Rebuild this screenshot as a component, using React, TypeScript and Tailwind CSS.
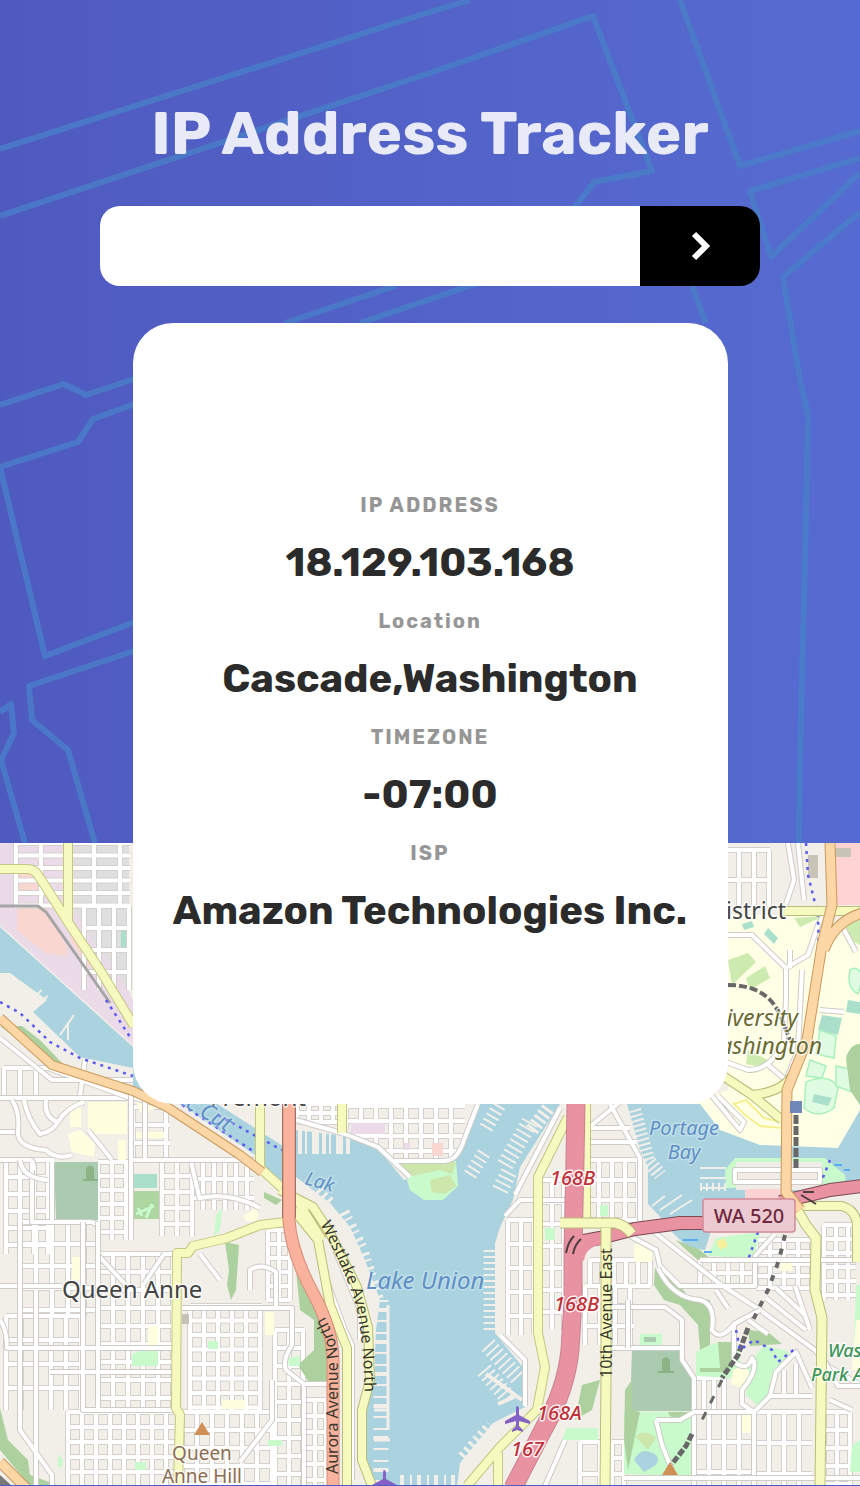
import React from "react";

type RoadProps = { d: string; fill: string; casing: string; width: number; edge?: number };

function Road({ d, fill, casing, width, edge = 2 }: RoadProps) {
  return (
    <g fill="none" strokeLinejoin="round">
      <path d={d} stroke={casing} strokeWidth={width + edge} />
      <path d={d} stroke={fill} strokeWidth={width} />
    </g>
  );
}

/* Street blocks: left, top, right, bottom, column spacing, row spacing */
type Block = [number, number, number, number, number, number];

const blocks: Block[] = [
  [16, 843, 68, 908, 25, 12.5],
  [68, 843, 130, 906, 26, 12.5],
  [84, 906, 129, 990, 15, 22],
  [4, 1068, 48, 1098, 16, 30],
  [98, 1162, 131, 1240, 14, 14],
  [133, 1107, 170, 1160, 33, 18],
  [162, 1160, 192, 1236, 15, 16],
  [192, 1160, 254, 1210, 11, 19],
  [6, 1160, 54, 1254, 14, 17],
  [20, 1222, 98, 1316, 16, 22],
  [98, 1254, 176, 1410, 15, 18],
  [6, 1316, 83, 1410, 15, 24],
  [190, 1306, 262, 1410, 14, 14.5],
  [68, 1412, 176, 1486, 14, 15],
  [182, 1412, 275, 1486, 15, 18],
  [268, 1230, 290, 1300, 11, 14],
  [275, 1330, 304, 1486, 14, 18],
  [304, 1400, 326, 1486, 11, 16],
  [297, 1104, 338, 1122, 12, 9],
  [346, 1106, 465, 1158, 15, 15],
  [508, 1220, 535, 1335, 13, 24],
  [540, 1180, 565, 1330, 12, 22],
  [586, 1160, 642, 1222, 13, 20],
  [590, 1260, 650, 1286, 12, 26],
  [585, 1286, 634, 1345, 15, 20],
  [700, 1260, 756, 1286, 14, 13],
  [756, 1240, 812, 1288, 14, 12],
  [824, 1225, 856, 1300, 12, 14],
  [694, 1378, 724, 1412, 10, 34],
  [694, 1412, 754, 1486, 15, 30],
  [754, 1412, 812, 1486, 15, 31],
  [824, 1412, 852, 1486, 13, 18],
  [612, 1442, 624, 1486, 12, 16],
  [580, 1442, 600, 1486, 20, 32],
  [724, 850, 770, 906, 15, 30],
];

function blockPath([l, t, r, b, dx, dy]: Block): string {
  const parts: string[] = [];
  for (let x = l; x <= r; x += dx) parts.push(`M${x} ${t}V${b}`);
  for (let y = t; y <= b; y += dy) parts.push(`M${l} ${y}H${r}`);
  return parts.join("");
}

const gridPath = blocks.map(blockPath).join("");

const streets = [
  "M0 1098H135L170 1107M0 1132H20M32 1162V1222H54M0 1160H30Q34 1160 34 1170M52 1162V1222H90Q98 1222 98 1230V1255L125 1284M0 1286H62M144 1284L164 1254H176",
  "M12 1100Q20 1112 18 1130T46 1150Q56 1160 72 1155M24 1100Q28 1120 40 1134Q52 1132 58 1122Q66 1108 84 1102M46 1100Q44 1118 58 1122M48 1068L130 1098M0 1038L52 1080H133M85 1060L80 1095M88 1130L112 1160M20 1160Q22 1178 48 1180",
  "M0 1320Q7 1330 7 1348H176M20 1222V1430L52 1475V1486M36 1290V1486M83 1222V1410H176M50 1372H176M98 1222V1412M131 1090V1240M145 1090V1160M130 1160H250M130 1254H160",
  "M182 1308H292V1345Q282 1360 286 1370L304 1384V1486M200 1254L220 1280M250 1290V1270Q262 1262 276 1272V1308M272 1380V1420L240 1462M192 1166L200 1200M200 1198Q230 1192 260 1208",
  "M296 1120L345 1134L378 1147L410 1177M394 1161H445Q458 1160 464 1140L478 1104M320 1262L345 1330L352 1345V1480M335 1250L360 1310V1340M305 1384H330M500 1335L525 1360V1406M505 1216L520 1200H565M515 1195L560 1108M565 1440L545 1486",
  "M588 1128L620 1102M610 1104L640 1158V1222L654 1232L720 1284L760 1310L815 1350L828 1366L862 1386M588 1128H630M586 1142H636M610 1307H665L682 1320V1360L694 1378V1486M610 1348H682M630 1236L656 1250L660 1266L680 1286H755V1256L775 1234",
  "M658 1268Q672 1298 700 1300Q716 1304 712 1330Q720 1342 734 1324V1362Q748 1372 752 1358Q760 1368 742 1390V1404L754 1412M734 1324L760 1310M694 1412H754L770 1396H812M754 1412V1486M728 1308L716 1290M748 1320L768 1334M795 1286L810 1330M776 1288L806 1316M766 1298L806 1330M700 1260H856M770 1396L776 1372L796 1352L812 1388M784 1396V1370M796 1394V1364M628 1348V1300",
  "M724 935H752L786 968L808 955L818 925L824 915M786 968V1000L784 1040Q772 1070 748 1070L726 1062M802 970L798 1050L786 1080L768 1065M790 950V968M843 928L856 952M820 1010L844 1012M788 843L794 880L786 904M798 843L804 900M712 1096L740 1130L744 1122L718 1096",
  "M735 1170H820V1182H735ZM656 1420L662 1445L672 1470M656 1420H680L694 1412M624 1478H862M860 1386H838L824 1360M830 1400L852 1410",
];

const piersEast = "M492 1250V1330M500 1190L510 1170M505 1165L530 1122M488 1345L520 1380M484 1370L510 1400";

function CityMap() {
  return (
    <svg
      className="block h-[642px] w-full"
      viewBox="0 843 860 642"
      preserveAspectRatio="xMidYMin slice"
      role="img"
      aria-label="Map"
      fontFamily="'Noto Sans', sans-serif"
    >
      <defs>
        <path id="westlake" d="M320 1224Q344 1268 354 1300T365 1410" />
        <path id="aurora" d="M338 1474V1356Q336 1334 318 1306" />
        <path id="tenth" d="M612 1378V1236" />
      </defs>
      <rect y="843" width="860" height="643" fill="#f2efe9" />

      {/* Land use */}
      <path d="M0 843H92V925L133 1000V1045L0 925Z" fill="#ebdbe8" />
      <path d="M73 843H129V992L74 912Z" fill="#dfdfdf" />
      <path d="M17 907H45L67 947V956L45 953L17 930ZM17 872H37L42 892H17ZM75 922L92 960L88 968L70 940Z" fill="#fad6d0" />
      <path d="M121 926H128V948H121Z" fill="#aae0cb" />
      <path d="M836 843H860V905H836Z" fill="#ffd3d1" />
      <path d="M808 855H818V878H808ZM835 848H851V857H835Z" fill="#c8c5b8" />
      <path d="M728 915H826L808 1050L860 1060V1140L837 1148L760 1148L728 1140L696 1120L684 1106L728 1090Z" fill="#ffffe5" />
      <path d="M826 925L860 915V1130L800 1130L800 1060Z" fill="#ffffe5" />
      <path d="M836 925L860 915V945L850 940ZM728 960L748 953L756 962L732 985ZM746 978L765 966L770 978L750 990ZM748 1050L768 1060L766 1068L746 1064ZM794 918L824 916L800 927Z" fill="#cdebb0" />
      <path d="M742 924L752 921L754 927L744 930ZM768 928L778 938L774 944L764 934ZM822 1015L842 1018L838 1035L818 1030ZM848 1000L860 1002V1014L846 1012Z" fill="#aae0cb" />
      <path d="M820 1030l16 6-2 22-18-4zM810 1060l16 6-4 12-16-2zM836 1066l18 4-2 22-16-6zM806 1082q24-10 32 6l-4 20q-16 12-30 0zM850 970q10-6 12 10l-4 14q-12-6-8-24z" fill="#dffce2" stroke="#a8f0bc" strokeWidth="1.5" />
      <path d="M814 1094l18 4-4 8-16-4z" fill="#aae0cb" />
      <path d="M846 1058Q850 1044 860 1044V1105L850 1090Z" fill="#add19e" />
      <path d="M734 1104L746 1100L764 1118L782 1122V1128L760 1126L744 1114Z" fill="none" stroke="#f7f090" strokeWidth="2" />

      {/* Minor streets */}
      <Road d={gridPath} fill="#ffffff" casing="#d3d0cd" width={4} />

      {/* Parks, schools and cemeteries */}
      <path d="M88 1102H127V1134H88ZM70 1104H81V1127H70ZM68 1134L80 1130L95 1144L94 1157L72 1152ZM118 1140H126V1160H118ZM136 1102L154 1100V1110L140 1112ZM136 1132H164V1138H136ZM72 1257H80V1280H72ZM148 1326H158V1348H148ZM243 1216L258 1207V1220L246 1222ZM265 1312H274V1335H265ZM222 1400H245V1409H222Z" fill="#ffffe0" />
      <path d="M0 1026L22 1026L40 1040L62 1063L52 1065ZM0 1408L8 1440L28 1460L30 1475L60 1486H30L0 1450ZM225 1242L239 1245L236 1290L231 1300L227 1285L229 1270ZM264 1192L282 1200L276 1205L264 1198ZM292 1230L316 1300L334 1355V1384H310L298 1365L314 1350V1320L300 1310Z" fill="#add19e" />
      <path d="M134 1191H159V1219H134Z" fill="#aed6a0" />
      <path d="M136 1214l18-8M146 1218l6-14M142 1216l-4-8" stroke="#c8facc" strokeWidth="3" />
      <path d="M134 1174H157V1188H134Z" fill="#aae0cb" />
      <path d="M216 1215L222 1208L220 1230L214 1236ZM132 1354L142 1350L158 1350V1366H132ZM208 1341H218V1349H208ZM288 1358L300 1356V1366H289ZM268 1440H282V1446H268ZM135 1462H146V1470H135ZM58 1454L63 1460L62 1467H58Z" fill="#c8facc" />
      <path d="M54 1162H98V1220H56Z" fill="#aacbaf" />
      <path d="M86 1180V1168Q90 1163 94 1168V1180ZM83 1179H98V1181H83Z" fill="#8cb387" />
      <path d="M352 1123H385V1134H350ZM404 1143H410V1150H404Z" fill="#ebdbe8" />
      <path d="M432 1143H443V1156H432Z" fill="#fad6d0" />
      <path d="M182 1314H189V1324H182Z" fill="#c5c2b6" />

      {/* Water */}
      <g fill="#aad3df">
        <path d="M0 927L133 1047V1068L80 1057L33 1012L47 1000L10 973H0Z" />
        <path d="M133 1050L289 1150V1195L275 1180L255 1155L182 1105L133 1090Z" />
        <path d="M296 1130L345 1136L378 1149L404 1180L450 1166L466 1140L480 1104H560L520 1167L513 1200L500 1227L495 1243V1333L525 1370V1407L493 1423L460 1463L457 1486H403L366 1486L364 1420L374 1380L376 1330L380 1300L365 1260L350 1227L330 1203L296 1177Z" />
        <path d="M627 1104H700L720 1130L760 1145L838 1148L860 1110V1190L790 1200L740 1222L665 1222L648 1204V1167L640 1150Z" />
        <path d="M668 1228H712L705 1250L688 1248Z" />
      </g>
      {/* Piers and docks */}
      <g fill="none" stroke="#f2efe9">
        <path d="M298 1142H352" strokeWidth="24" strokeDasharray="4 3 2 5 7 3" />
        <path d="M318 1190L332 1204" strokeWidth="10" strokeDasharray="3 4" />
        <path d={piersEast} strokeWidth="17" strokeDasharray="2 4" />
        <path d="M340 1214L358 1250L374 1300" strokeWidth="20" strokeDasharray="3 4 2 6" />
        <path d="M381 1300V1486" strokeWidth="15" strokeDasharray="2 6 4 8 2 10" />
        <path d="M388 1305V1430M374 1410H388M374 1440H390" strokeWidth="3" />
        <path d="M466 1460L494 1428" strokeWidth="20" strokeDasharray="3 4" />
        <path d="M486 1374L522 1400M498 1404L516 1396" strokeWidth="4" />
        <path d="M470 1175L486 1150M486 1128L500 1104" strokeWidth="14" strokeDasharray="2 4" />
        <path d="M532 1130L550 1106" strokeWidth="14" strokeDasharray="3 3" />
        <path d="M634 1110L648 1160L660 1175" strokeWidth="14" strokeDasharray="2 3" />
        <path d="M652 1206L665 1196M660 1210L682 1195M670 1214L692 1200M700 1168H726M700 1178H726M700 1188H726" strokeWidth="2" />
        <path d="M700 1187H726" strokeWidth="8" strokeDasharray="2 4" />
        <path d="M30 1000L42 990M34 1006L48 996M60 1035L74 1015M68 1040V1022" strokeWidth="2" />
        <path d="M400 1480H456" strokeWidth="10" strokeDasharray="4 6 2 5" />
      </g>
      <path d="M407 1180L412 1164L456 1161L458 1186L443 1200H424L410 1190Z" fill="#c8facc" />
      <path d="M398 1162H456L452 1174L440 1170L412 1176ZM430 1180L450 1175L456 1186L445 1194L432 1192Z" fill="#cde6ac" />
      <path d="M725 1170L735 1158H825L845 1175L846 1183L825 1188H726Z" fill="#c8facc" />
      <path d="M736 1162H822V1190H736Z" fill="#f0ede8" />
      <path d="M745 1189H790V1205H745Z" fill="#fad3d3" />

      {/* East side greens */}
      <path d="M676 1240L700 1250L710 1258L698 1260L684 1248ZM655 1268L670 1275L690 1298L710 1300V1345L700 1350L698 1325L680 1305L664 1300L654 1285ZM748 1330L768 1332L782 1344L750 1346Z" fill="#add19e" />
      <path d="M716 1238L760 1232L754 1258L708 1256ZM696 1352L718 1342L738 1345L742 1372L764 1345L790 1352L770 1380L770 1396L758 1406L746 1395L750 1370L730 1378L696 1376ZM624 1412H694V1476L624 1474ZM640 1334H662V1345H640ZM600 1205H608V1216H600ZM566 1428H598V1440H562ZM545 1228H555V1240H545ZM856 1285H860V1370H853ZM852 1445L860 1440V1472H850Z" fill="#c8facc" />
      <path d="M718 1342H734V1362L726 1372H700V1368H720Z" fill="#add19e" />
      <path d="M644 1337H656V1342H644Z" fill="#aacbaf" />
      <path d="M632 1349H682L692 1380V1411H630Z" fill="#aacbaf" />
      <path d="M662 1372V1360Q666 1354 670 1360V1372ZM658 1371H674V1373H658Z" fill="#8cb387" />
      <path d="M625 1390L632 1380V1410L640 1412L628 1470L624 1440ZM668 1412H692L680 1420L670 1416ZM582 1385L600 1380L592 1410L575 1420Z" fill="#add19e" />
      <path d="M635 1436Q646 1428 656 1438L648 1450Z" fill="#cde6ac" />
      <path d="M634 1460Q640 1448 650 1452Q662 1456 656 1465L644 1472Z" fill="#aad3df" />
      <path d="M733 1370L745 1364L752 1378L745 1390L731 1384ZM634 1244H652V1262H634ZM780 1263H792V1271H780ZM742 1415H751V1433H742ZM856 1320H860V1370H852Z" fill="#ffffe0" />
      <path d="M716 1242L724 1238L728 1246L720 1250Z" fill="#f6f09a" />

      {streets.map((d) => (
        <Road key={d} d={d} fill="#ffffff" casing="#cecbc8" width={4} />
      ))}

      {/* Railways and paths */}
      <g fill="none">
        <path d="M0 906H38L46 912L110 1003" stroke="#a5a5a5" strokeWidth="3" />
        <path d="M728 985Q770 985 782 1020L790 1040" stroke="#686868" strokeWidth="4" strokeDasharray="8 3" />
        <path d="M796 1104V1170" stroke="#686868" strokeWidth="5" strokeDasharray="9 2" />
        <path d="M785 1235L779 1260L768 1290L752 1322" stroke="#686868" strokeWidth="4" strokeDasharray="6 8" />
        <path d="M748 1328L738 1355L722 1378M692 1434L686 1446L672 1464" stroke="#686868" strokeWidth="5" strokeDasharray="7 2" />
        <path d="M722 1380L698 1428" stroke="#686868" strokeWidth="3" strokeDasharray="8 10" />
        <g stroke="#5b5bf0" strokeWidth="2.5" strokeDasharray="3 5">
          <path d="M0 1002L20 1013L50 1042L80 1058L133 1076" />
          <path d="M182 1105L253 1151M218 1115L254 1135L282 1150M106 1000L132 1040" />
          <path d="M806 843L808 875L818 915L819 955L813 985" />
          <path d="M736 1330L740 1350L754 1340L772 1350L778 1362L796 1348M758 1232L748 1260M830 1160L822 1180" />
        </g>
        <path d="M683 1240H698M704 1252H712M680 1228H692M834 1165H842M844 1170H850" stroke="#55aef0" strokeWidth="2" />
      </g>

      {/* Secondary roads */}
      <Road
        d="M0 869H28Q35 869 40 878L70 925L100 970L134 1026M68 843V922M260 1104V1170M260 1168L300 1204M178 1485L180 1415L176 1408L177 1253H188L193 1246L227 1238L260 1225L286 1222M342 1104V1133"
        fill="#f7fabf" casing="#c3c780" width={8}
      />
      <Road
        d="M280 1190L313 1207L330 1233L357 1287L368 1327L370 1380L362 1410V1460L372 1486M292 1208L318 1240L330 1305L347 1348V1486M296 1198L322 1240"
        fill="#f7fabf" casing="#b9bd79" width={8}
      />
      <Road
        d="M568 1117L538 1177V1333L545 1367L537 1410L500 1447L467 1486M498 1453V1486M586 1104V1223"
        fill="#f7fabf" casing="#c3c780" width={8}
      />
      <Road
        d="M782 911H860M720 1074L752 1095L782 1120M752 1095Q782 1092 792 1076M862 1206M800 1206H842Q856 1210 857 1225V1262"
        fill="#f7fabf" casing="#b9bd79" width={8}
      />

      {/* Motorways */}
      <g fill="none" strokeLinejoin="round">
        <path d="M576 1104L575 1160L573 1250V1300L570 1350Q566 1390 543 1430L513 1488M573 1243L600 1238L635 1229L680 1223H710M780 1202L830 1190L862 1186" stroke="#7c4a55" strokeWidth="14" />
        <path d="M576 1104L575 1160L573 1250V1300L570 1350Q566 1390 543 1430L513 1488" stroke="#c98391" strokeWidth="19" />
        <path d="M576 1104L575 1160L573 1250V1300L570 1350Q566 1390 543 1430L513 1488" stroke="#e892a2" strokeWidth="17" />
        <path d="M573 1243L600 1238L635 1229L680 1223H710M780 1202L830 1190L862 1186M578 1260Q580 1240 605 1238" stroke="#e892a2" strokeWidth="12" />
        <path d="M566 1253Q568 1242 574 1236M573 1254Q575 1244 581 1239M801 1195L816 1204M803 1192L814 1192" stroke="#4b3c3f" strokeWidth="2" />
      </g>
      <Road
        d="M560 1223H615Q624 1224 632 1234M606 1228V1380L605 1486M796 1208L806 1225L816 1238L815 1290L822 1318L820 1486"
        fill="#f7fabf" casing="#b9bd79" width={9}
      />

      {/* Primary roads */}
      <Road d="M0 1018L52 1065L133 1091L167 1107L240 1155L262 1172" fill="#fcd6a4" casing="#c99a5e" width={8} />
      <Road d="M0 1462L26 1488" fill="#fcd6a4" casing="#c99a5e" width={9} />
      <path d="M0 1475L12 1486H0Z" fill="#777" />
      <Road
        d="M830 843L832 905L822 945L807 1040L787 1090L786 1192L800 1210M862 913Q834 922 824 950"
        fill="#fcd6a4" casing="#c99a5e" width={9}
      />
      <path d="M289 1104V1218" stroke="#6b5b58" strokeWidth="14" fill="none" />
      <Road d="M289 1104V1220Q291 1252 313 1293Q333 1330 333 1360V1486" fill="#f9b29c" casing="#d68c79" width={11} />

      {/* Map symbols */}
      <rect x="790" y="1101" width="12" height="12" fill="#7088b8" />
      <path d="M194 1435L202 1422L210 1435ZM662 1475L670 1462L678 1475Z" fill="#d08f55" />
      <g fill="#8461c4">
        <path id="plane" d="M517 1406Q519 1406 519 1410V1415L530 1421V1424L519 1421V1426L523 1430V1432L517 1430L512 1432V1430L516 1426V1421L505 1424V1421L516 1415V1410Q516 1406 517 1406Z" />
        <use href="#plane" x="-133" y="64" />
      </g>

      {/* Labels */}
      <g stroke="#ffffff" strokeWidth="3" strokeOpacity="0.7" paintOrder="stroke" strokeLinejoin="round">
        <g fontSize="24" fill="#444444">
          <text x="62" y="1298">Queen Anne</text>
          <text x="786" y="919" fontSize="23" textAnchor="end">District</text>
          <text x="258" y="1106" textAnchor="middle">Fremont</text>
        </g>
        <g fontSize="23" fontStyle="italic" fill="#6a6a30">
          <text x="798" y="1026" textAnchor="end">University</text>
          <text x="822" y="1054" textAnchor="end">Washington</text>
        </g>
        <g fontStyle="italic" fill="#5f8fc6" strokeOpacity="0.3">
          <text x="366" y="1289" fontSize="24">Lake Union</text>
          <g fontSize="20" textAnchor="middle">
            <text x="684" y="1135">Portage</text>
            <text x="684" y="1159">Bay</text>
          </g>
          <text x="304" y="1184" fontSize="19" transform="rotate(16 304 1184)">Lak</text>
          <text x="180" y="1104" fontSize="22" transform="rotate(31 180 1104)">ic Cut</text>
        </g>
        <g fontSize="19" fill="#8d6d52" textAnchor="middle">
          <text x="202" y="1460">Queen</text>
          <text x="202" y="1483">Anne Hill</text>
        </g>
        <g fontSize="18" fontStyle="italic" fontWeight="500" fill="#3d9457">
          <text x="828" y="1357">Washington</text>
          <text x="811" y="1381">Park Arboretum</text>
        </g>
        <g fontSize="20" fontStyle="italic" fontWeight="500" fill="#c03038" strokeOpacity="0.85">
          <text x="550" y="1185">168B</text>
          <text x="554" y="1311">168B</text>
          <text x="537" y="1420">168A</text>
          <text x="511" y="1456">167</text>
        </g>
      </g>
      <g fontSize="16" fill="#38382c">
        <text><textPath href="#westlake">Westlake Avenue North</textPath></text>
        <text><textPath href="#aurora">Aurora Avenue North</textPath></text>
        <text><textPath href="#tenth">10th Avenue East</textPath></text>
      </g>
      <rect x="703" y="1199" width="92" height="33" rx="3" fill="#ebcbd1" stroke="#d28a97" strokeWidth="1.5" />
      <text x="749" y="1223" fontSize="20" fontWeight="500" fill="#70283f" textAnchor="middle">WA 520</text>
    </svg>
  );
}

function HeaderPattern() {
  return (
    <svg
      className="absolute inset-0 h-full w-full"
      viewBox="0 0 860 843"
      preserveAspectRatio="xMidYMin slice"
      aria-hidden="true"
    >
      <g fill="none" stroke="#497fc9" strokeWidth="6" strokeLinejoin="round" opacity="0.8">
        <path d="M0 149L430 12L470 0" />
        <path d="M0 216L430 73L593 16L652 171L594 182L575 207L540 262L360 323" />
        <path d="M395 286L285 323M692 286L706 323" />
        <path d="M680 0L740 166L860 131" />
        <path d="M860 158L750 191L771 257L860 173" />
        <path d="M860 212L783 277L800 380L808 415L805 560L800 760L799 843" />
        <path d="M0 405L64 384L86 395L140 377" />
        <path d="M140 402L93 419L78 442L0 467L45 656L140 620" />
        <path d="M140 649L29 686L32 720L68 750L95 843" />
        <path d="M0 712L11 704L14 733L1 760L25 843" />
      </g>
    </svg>
  );
}

const details = [
  { label: "IP ADDRESS", value: "18.129.103.168" },
  { label: "Location", value: "Cascade,Washington" },
  { label: "TIMEZONE", value: "-07:00" },
  { label: "ISP", value: "Amazon Technologies Inc." },
];

export default function App() {
  return (
    <div className="min-h-screen bg-[#4f5bbf] font-['Rubik','Inter',sans-serif]">
      <header className="relative z-10 flex flex-col items-center bg-linear-to-r from-[#4f5abf] to-[#566bd1] px-6 pt-[98px]">
        <HeaderPattern />
        <h1 className="relative text-center text-[60px] leading-[72px] font-bold text-[#e8eaf8]">
          IP Address Tracker
        </h1>
        <form
          className="relative mt-9 flex h-20 w-full max-w-[660px] overflow-hidden rounded-[20px]"
          onSubmit={(e: React.FormEvent) => e.preventDefault()}
        >
          <input
            type="text"
            aria-label="IP address or domain"
            className="min-w-0 flex-1 bg-white px-6 text-2xl text-[#2b2b2b] outline-none"
          />
          <button type="submit" aria-label="Search" className="flex w-[120px] items-center justify-center bg-black">
            <svg className="h-8 w-6" viewBox="0 0 24 32" fill="none" stroke="#ffffff" strokeWidth="6">
              <path d="M6 4L18 16L6 28" />
            </svg>
          </button>
        </form>
        <dl className="relative mt-[37px] -mb-[261px] flex w-full max-w-[595px] flex-col gap-[22px] rounded-[40px] bg-white px-4 pt-[170px] pb-[169px] text-center">
          {details.map(({ label, value }) => (
            <div key={label} className="flex flex-col gap-[22px]">
              <dt className="text-xl leading-6 font-bold tracking-widest text-[#969696]">{label}</dt>
              <dd className="text-[40px] leading-[48px] font-bold text-[#2b2b2b]">{value}</dd>
            </div>
          ))}
        </dl>
      </header>
      <main>
        <CityMap />
      </main>
    </div>
  );
}
